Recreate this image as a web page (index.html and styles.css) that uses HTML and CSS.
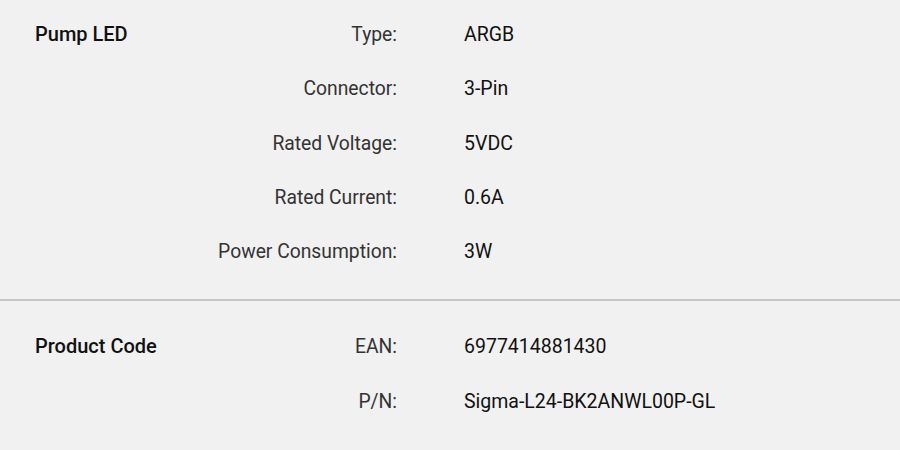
FILE: index.html
```html
<!DOCTYPE html>
<html>
<head>
<meta charset="utf-8">
<link rel="stylesheet" href="styles.css">
</head>
<body>
<section class="spec spec-led">
  <h3 class="spec-title">Pump LED</h3>
  <dl class="spec-list">
    <dt>Type:</dt><dd>ARGB</dd>
    <dt>Connector:</dt><dd>3-Pin</dd>
    <dt>Rated Voltage:</dt><dd>5VDC</dd>
    <dt>Rated Current:</dt><dd>0.6A</dd>
    <dt>Power Consumption:</dt><dd>3W</dd>
  </dl>
</section>
<section class="spec spec-code">
  <h3 class="spec-title">Product Code</h3>
  <dl class="spec-list">
    <dt>EAN:</dt><dd>6977414881430</dd>
    <dt>P/N:</dt><dd>Sigma-L24-BK2ANWL00P-GL</dd>
  </dl>
</section>
</body>
</html>
```
FILE: styles.css
```css
html, body {
  margin: 0;
  padding: 0;
  background: #f1f1f1;
  font-family: Roboto, "Noto Sans", sans-serif;
}
.spec {
  display: grid;
  grid-template-columns: 170px 1fr;
  padding-left: 35px;
  width: 900px;
  box-sizing: border-box;
}
.spec-led {
  padding-top: 8px;
  padding-bottom: 20px;
  border-bottom: 2px solid #c6c6c6;
}
.spec-code {
  padding-top: 19px;
}
.spec-title {
  margin: 0;
  font-size: 20px;
  font-weight: 500;
  color: #111;
  line-height: 52px;
  height: 52px;
}
.spec-list {
  margin: 0;
  display: grid;
  grid-template-columns: 192px 1fr;
  grid-auto-rows: 54.25px;
  column-gap: 67px;
}
.spec-list dt,
.spec-list dd {
  margin: 0;
  line-height: 54px;
  white-space: nowrap;
}
.spec-list dt {
  text-align: right;
  font-size: 19.3px;
  color: #333;
}
.spec-list dd {
  font-size: 19.5px;
  color: #111;
}
```
